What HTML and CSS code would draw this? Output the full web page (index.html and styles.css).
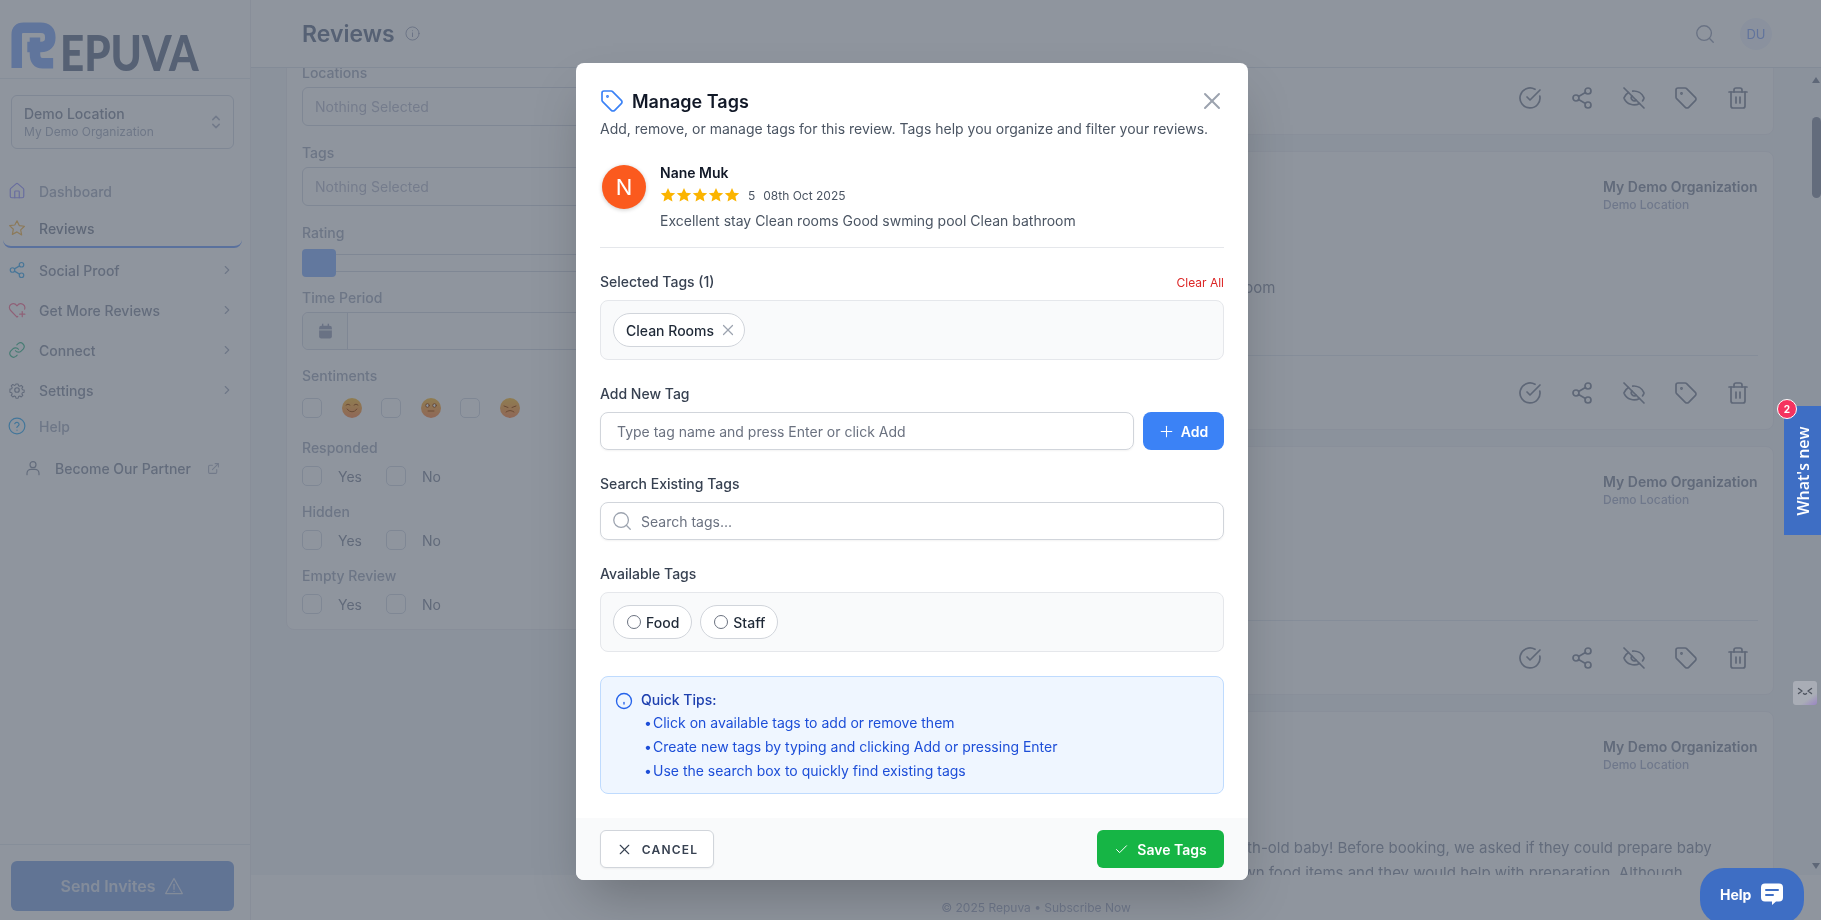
FILE: index.html
```html
<!DOCTYPE html>
<html lang="en">
<head>
    <meta charset="UTF-8">
    <meta name="viewport" content="width=device-width, initial-scale=1.0">
    <title>Reviews - Repuva</title>
    <link rel="stylesheet" href="styles.css">
</head>
<body>
    <!-- shared icons -->
    <svg class="icon-defs" xmlns="http://www.w3.org/2000/svg">
        <defs><linearGradient id="emo" x1="0" y1="0" x2="0" y2="1"><stop offset="0" stop-color="#f3cf83"/><stop offset="1" stop-color="#f5a884"/></linearGradient></defs>
        <symbol id="i-check" viewBox="0 0 24 24"><path d="M21.8 10A10 10 0 1 1 17 3.3"/><path d="m9 11 3 3L22 4"/></symbol>
        <symbol id="i-share" viewBox="0 0 24 24"><circle cx="18" cy="5" r="3"/><circle cx="6" cy="12" r="3"/><circle cx="18" cy="19" r="3"/><path d="m8.6 13.5 6.8 4"/><path d="m15.4 6.5-6.8 4"/></symbol>
        <symbol id="i-eyeoff" viewBox="0 0 24 24"><path d="M10.7 5.1A11 11 0 0 1 21.9 11.7a1 1 0 0 1 0 .7 11 11 0 0 1-1.4 2.5"/><path d="M14.1 14.2a3 3 0 0 1-4.2-4.2"/><path d="M17.5 17.5a11 11 0 0 1-15.4-5.2 1 1 0 0 1 0-.7 11 11 0 0 1 4.4-5.1"/><path d="m2 2 20 20"/></symbol>
        <symbol id="i-tag" viewBox="0 0 24 24"><path d="M12.6 2.6A2 2 0 0 0 11.2 2H4a2 2 0 0 0-2 2v7.2a2 2 0 0 0 .6 1.4l8.7 8.7a2.4 2.4 0 0 0 3.4 0l6.6-6.6a2.4 2.4 0 0 0 0-3.4z"/><circle cx="7.5" cy="7.5" r=".6"/></symbol>
        <symbol id="i-trash" viewBox="0 0 24 24"><path d="M3 6h18"/><path d="M19 6v14c0 1-1 2-2 2H7c-1 0-2-1-2-2V6"/><path d="M8 6V4c0-1 1-2 2-2h4c1 0 2 1 2 2v2"/><path d="M10 11v6"/><path d="M14 11v6"/></symbol>
        <symbol id="i-search" viewBox="0 0 24 24"><circle cx="11" cy="11" r="8"/><path d="m21 21-4.3-4.3"/></symbol>
        <symbol id="i-chev" viewBox="0 0 24 24"><path d="m9 18 6-6-6-6"/></symbol>
        <symbol id="i-x" viewBox="0 0 24 24"><path d="M18 6 6 18"/><path d="m6 6 12 12"/></symbol>
        <symbol id="i-star" viewBox="0 0 24 24"><path d="M12 1.5l3.2 7 7.6.8-5.7 5.1 1.6 7.5L12 18.1l-6.7 3.8 1.6-7.5L1.2 9.3l7.6-.8z"/></symbol>
    </svg>

    <div class="app">
        <!-- sidebar -->
        <aside class="sidebar">
            <div class="logo">
                <svg class="logo-mark" viewBox="0 0 48 50"><path d="M6 48V13Q6 6 13 6H31Q41 6 41 16Q41 26 31 26H17"/><path d="M25 16V33Q25 43 33 43H44"/></svg>
                <span class="logo-text">EPUVA</span>
            </div>
            <div class="loc-select">
                <div>
                    <div class="loc-name">Demo Location</div>
                    <div class="loc-org">My Demo Organization</div>
                </div>
                <svg class="loc-arrows" viewBox="0 0 12 20"><path d="M2 7l4-4 4 4"/><path d="M2 13l4 4 4-4"/></svg>
            </div>
            <nav class="nav">
                <a class="nav-item muted">
                    <svg class="nav-icon ic-house" viewBox="0 0 24 24"><path d="M15 21v-8a1 1 0 0 0-1-1h-4a1 1 0 0 0-1 1v8"/><path d="M3 10a2 2 0 0 1 .7-1.500l7-6a2 2 0 0 1 2.600 0l7 6A2 2 0 0 1 21 10v9a2 2 0 0 1-2 2H5a2 2 0 0 1-2-2z"/></svg>
                    Dashboard
                </a>
                <a class="nav-item active">
                    <svg class="nav-icon ic-star" viewBox="0 0 24 24"><path d="M12 2.500l3 6.300 6.900.9-5 4.800 1.300 6.800L12 17.200l-6.200 3.300 1.300-6.800-5-4.800 6.900-.9z"/></svg>
                    Reviews
                </a>
                <a class="nav-item has-sub first-sub">
                    <svg class="nav-icon ic-share"><use href="#i-share"/></svg>
                    Social Proof
                    <svg class="nav-chev"><use href="#i-chev"/></svg>
                </a>
                <a class="nav-item has-sub">
                    <svg class="nav-icon ic-heart" viewBox="0 0 24 24"><path d="M13 20.500l-1 1-8.500-8.800C1 10 1.500 6.500 3.800 4.800 6.500 3 9.800 3.700 12 6.500c2.200-2.800 5.500-3.500 8.200-1.700 2 1.400 2.700 3.800 2 6"/><path d="M19 14v7"/><path d="M15.500 17.500h7"/></svg>
                    Get More Reviews
                    <svg class="nav-chev"><use href="#i-chev"/></svg>
                </a>
                <a class="nav-item has-sub">
                    <svg class="nav-icon ic-link" viewBox="0 0 24 24"><path d="M10 13a5 5 0 0 0 7.500.5l3-3a5 5 0 0 0-7-7l-1.700 1.700"/><path d="M14 11a5 5 0 0 0-7.500-.5l-3 3a5 5 0 0 0 7 7l1.700-1.700"/></svg>
                    Connect
                    <svg class="nav-chev"><use href="#i-chev"/></svg>
                </a>
                <a class="nav-item has-sub">
                    <svg class="nav-icon ic-gear" viewBox="0 0 24 24"><path d="M10.300 2.800h3.400l.6 2.700 1.900.8 2.300-1.500 2.400 2.400-1.500 2.300.8 1.900 2.700.6v3.400l-2.700.6-.8 1.900 1.500 2.300-2.400 2.400-2.300-1.500-1.900.8-.6 2.700h-3.400l-.6-2.700-1.900-.8-2.300 1.500-2.400-2.400 1.500-2.300-.8-1.900-2.700-.6V10.600l2.700-.6.8-1.900-1.500-2.300 2.400-2.400 2.300 1.500 1.900-.8z" transform="translate(1.600 1.600) scale(.87)"/><circle cx="12" cy="12" r="3"/></svg>
                    Settings
                    <svg class="nav-chev"><use href="#i-chev"/></svg>
                </a>
                <a class="nav-item help-item muted">
                    <svg class="nav-icon ic-help" viewBox="0 0 24 24"><circle cx="12" cy="12" r="10.500"/><path d="M9 9a3 3 0 0 1 5.800 1c0 2-3 2.600-3 4"/><path d="M12 17.500h.01"/></svg>
                    Help
                </a>
                <a class="nav-partner">
                    <svg class="partner-icon" viewBox="0 0 24 24"><circle cx="12" cy="7" r="4.500"/><path d="M3 22v-2a6 6 0 0 1 6-6h6a6 6 0 0 1 6 6v2"/></svg>
                    Become Our Partner
                    <svg class="partner-ext" viewBox="0 0 24 24"><path d="M15 3h6v6"/><path d="M10 14 21 3"/><path d="M18 14v5a2 2 0 0 1-2 2H5a2 2 0 0 1-2-2V8a2 2 0 0 1 2-2h5"/></svg>
                </a>
            </nav>
            <div class="sidebar-foot">
                <button class="send-btn">Send Invites
                    <svg viewBox="0 0 24 24"><path d="M12 3 2 21h20z"/><path d="M12 10v6"/><path d="M12 18.500h.01"/></svg>
                </button>
            </div>
        </aside>

        <!-- main area -->
        <div class="main">
            <header class="topbar">
                <h1 class="page-title">Reviews</h1>
                <svg class="title-info" viewBox="0 0 24 24"><circle cx="12" cy="12" r="10.500"/><path d="M12 11v6"/><path d="M12 7.500h.01"/></svg>
                <svg class="top-search"><use href="#i-search"/></svg>
                <div class="top-avatar">DU</div>
            </header>

            <div class="scroll-wrap">
                <div class="content">
                    <section class="filters">
                        <div class="f-label">Locations</div>
                        <div class="f-select">Nothing Selected</div>
                        <div class="f-label">Tags</div>
                        <div class="f-select">Nothing Selected</div>
                        <div class="f-label">Rating</div>
                        <div class="f-slider"><span class="f-thumb"></span></div>
                        <div class="f-label">Time Period</div>
                        <div class="f-date">
                            <span class="f-date-addon">
                                <svg viewBox="0 0 24 24"><rect x="3" y="4" width="18" height="18" rx="3"/><rect class="cal-line" x="3" y="9" width="18" height="1.500"/><rect x="7" y="1" width="2" height="4"/><rect x="15" y="1" width="2" height="4"/></svg>
                            </span>
                        </div>
                        <div class="f-label">Sentiments</div>
                        <div class="f-row sentiments">
                            <span class="cb"></span>
                            <svg class="emoji" viewBox="0 0 20 20"><circle class="emoji-face" cx="10" cy="10" r="10"/><path d="M4 7q2-2 4 0M12 7q2-2 4 0M5 11q5 6 10 0"/></svg>
                            <span class="cb"></span>
                            <svg class="emoji" viewBox="0 0 20 20"><circle class="emoji-face" cx="10" cy="10" r="10"/><circle class="eye" cx="6.500" cy="7.500" r="1.800"/><circle class="eye" cx="13.500" cy="7.500" r="1.800"/><path d="M7 13h6"/></svg>
                            <span class="cb"></span>
                            <svg class="emoji" viewBox="0 0 20 20"><circle class="emoji-face" cx="10" cy="10" r="10"/><path d="M4 8l4 1.500M16 8l-4 1.500M6 14q4-3 8 0"/></svg>
                        </div>
                        <div class="f-label">Responded</div>
                        <div class="f-row yesno"><span class="cb"></span><span class="f-opt">Yes</span><span class="cb"></span><span class="f-opt">No</span></div>
                        <div class="f-label">Hidden</div>
                        <div class="f-row yesno"><span class="cb"></span><span class="f-opt">Yes</span><span class="cb"></span><span class="f-opt">No</span></div>
                        <div class="f-label">Empty Review</div>
                        <div class="f-row yesno"><span class="cb"></span><span class="f-opt">Yes</span><span class="cb"></span><span class="f-opt">No</span></div>
                    </section>

                    <section class="reviews">
                        <article class="review">
                            <div class="review-body body-stub"></div>
                            <div class="review-actions">
                                <svg><use href="#i-check"/></svg><svg><use href="#i-share"/></svg><svg><use href="#i-eyeoff"/></svg><svg><use href="#i-tag"/></svg><svg><use href="#i-trash"/></svg>
                            </div>
                        </article>
                        <article class="review">
                            <div class="review-body body-tall">
                                <div class="review-org"><div class="org-name">My Demo Organization</div><div class="org-loc">Demo Location</div></div>
                                <p class="review-text">Excellent stay Clean rooms Good swming pool Clean bathroom</p>
                            </div>
                            <div class="review-actions">
                                <svg><use href="#i-check"/></svg><svg><use href="#i-share"/></svg><svg><use href="#i-eyeoff"/></svg><svg><use href="#i-tag"/></svg><svg><use href="#i-trash"/></svg>
                            </div>
                        </article>
                        <article class="review">
                            <div class="review-body body-short">
                                <div class="review-org"><div class="org-name">My Demo Organization</div><div class="org-loc">Demo Location</div></div>
                            </div>
                            <div class="review-actions">
                                <svg><use href="#i-check"/></svg><svg><use href="#i-share"/></svg><svg><use href="#i-eyeoff"/></svg><svg><use href="#i-tag"/></svg><svg><use href="#i-trash"/></svg>
                            </div>
                        </article>
                        <article class="review">
                            <div class="review-body body-tall">
                                <div class="review-org"><div class="org-name">My Demo Organization</div><div class="org-loc">Demo Location</div></div>
                                <p class="review-text">We all stayed here on a family holiday with our eleven-month-old baby! Before booking, we asked if they could prepare baby<br>food, and they said that we could always bring along our own food items and they would help with preparation. Although</p>
                            </div>
                        </article>
                    </section>
                </div>
                <div class="scrollbar">
                    <span class="sb-up"></span>
                    <span class="sb-thumb"></span>
                    <span class="sb-down"></span>
                </div>
            </div>

            <footer class="page-foot">© 2025 Repuva • Subscribe Now</footer>
        </div>
    </div>

    <!-- modal -->
    <div class="backdrop"></div>
    <div class="modal">
        <div class="modal-body">
            <div class="modal-head">
                <svg class="modal-tag"><use href="#i-tag"/></svg>
                <h2>Manage Tags</h2>
                <svg class="modal-close"><use href="#i-x"/></svg>
            </div>
            <p class="modal-sub">Add, remove, or manage tags for this review. Tags help you organize and filter your reviews.</p>

            <div class="preview">
                <div class="preview-avatar">N</div>
                <div class="preview-info">
                    <div class="preview-name">Nane Muk</div>
                    <div class="preview-meta">
                        <span class="stars"><svg><use href="#i-star"/></svg><svg><use href="#i-star"/></svg><svg><use href="#i-star"/></svg><svg><use href="#i-star"/></svg><svg><use href="#i-star"/></svg></span>
                        <span class="meta-num">5</span><span>08th Oct 2025</span>
                    </div>
                    <div class="preview-text">Excellent stay Clean rooms Good swming pool Clean bathroom</div>
                </div>
            </div>

            <div class="label-row">
                <label>Selected Tags (1)</label>
                <a class="clear-all">Clear All</a>
            </div>
            <div class="tag-box">
                <span class="chip">Clean Rooms <svg><use href="#i-x"/></svg></span>
            </div>

            <label class="block-label">Add New Tag</label>
            <div class="add-row">
                <div class="text-input add-input">Type tag name and press Enter or click Add</div>
                <button class="add-btn"><svg><use href="#i-x"/></svg>Add</button>
            </div>

            <label class="block-label">Search Existing Tags</label>
            <div class="text-input search-input">
                <svg><use href="#i-search"/></svg>
                Search tags...
            </div>

            <label class="block-label">Available Tags</label>
            <div class="tag-box">
                <span class="chip chip-avail"><i class="radio"></i>Food</span>
                <span class="chip chip-avail"><i class="radio"></i>Staff</span>
            </div>

            <div class="tips">
                <svg class="tips-icon" viewBox="0 0 24 24"><circle cx="12" cy="12" r="10"/><path d="M12 14v2"/></svg>
                <div>
                    <div class="tips-title">Quick Tips:</div>
                    <ul class="tips-list">
                        <li>Click on available tags to add or remove them</li>
                        <li>Create new tags by typing and clicking Add or pressing Enter</li>
                        <li>Use the search box to quickly find existing tags</li>
                    </ul>
                </div>
            </div>
        </div>
        <div class="modal-foot">
            <button class="cancel-btn"><svg><use href="#i-x"/></svg>Cancel</button>
            <button class="save-btn"><svg viewBox="0 0 24 24"><path d="M20 6 9 17l-5-5"/></svg>Save Tags</button>
        </div>
    </div>

    <!-- floating widgets -->
    <div class="whatsnew"><span class="whatsnew-text">What's new</span><span class="whatsnew-badge">2</span></div>
    <div class="bot-widget">
        <svg viewBox="0 0 24 24"><path d="M5.500 7.500l3.500 2.500-3.500 2.500"/><path d="M18.500 7.500l-3.500 2.500 3.500 2.500"/><path d="M10.500 12.500q1.500 1.500 3 0"/></svg>
    </div>
    <div class="help-btn">Help
        <svg viewBox="0 0 24 24"><path class="bubble" d="M5 1.500h14a4 4 0 0 1 4 4v10a4 4 0 0 1-4 4h-3l-4 3.500v-3.500H5a4 4 0 0 1-4-4v-10a4 4 0 0 1 4-4z"/><path class="bubble-line" d="M6 8h12M6 13h7"/></svg>
    </div>
</body>
</html>
```

FILE: styles.css
```css
* {
    box-sizing: border-box;
}
html, body {
    margin: 0;
    height: 920px;
    overflow: hidden;
}
body {
    font-family: Inter, "Noto Sans", sans-serif;
    font-size: 14px;
    color: #111827;
    background: #fff;
}
svg {
    fill: none;
    stroke: currentColor;
    stroke-width: 2;
    stroke-linecap: round;
    stroke-linejoin: round;
}
.icon-defs {
    position: absolute;
    width: 0;
    height: 0;
}
.app {
    display: flex;
    height: 920px;
}

/* sidebar */
.sidebar {
    width: 251px;
    flex: none;
    display: flex;
    flex-direction: column;
    background: #fff;
    border-right: 1px solid #f0f0f4;
}
.logo {
    height: 79px;
    display: flex;
    align-items: flex-start;
    padding: 22px 0 0 11px;
    border-bottom: 1px solid #eef0f3;
}
.logo-mark {
    width: 46px;
    height: 48px;
    flex: none;
    color: #a8bde8;
    stroke-width: 11;
    stroke-linecap: butt;
}
.logo-text {
    font-family: Lato, sans-serif;
    font-weight: 900;
    font-size: 49px;
    line-height: 48px;
    margin: 6px 0 0 3px;
    color: #8f96a4;
    transform: scaleX(.86);
    transform-origin: left center;
}
.loc-select {
    margin: 16px 16px 0 11px;
    height: 54px;
    border: 1px solid #dfe2e8;
    border-radius: 6px;
    padding: 0 12px;
    display: flex;
    align-items: center;
    justify-content: space-between;
}
.loc-name {
    font-weight: 500;
    color: #a5a9b3;
    line-height: 18px;
}
.loc-org {
    font-size: 12px;
    color: #bfc3cd;
    line-height: 17px;
}
.loc-arrows {
    width: 10px;
    height: 16px;
    color: #c6c9d2;
}
.nav {
    margin-top: 23px;
    flex: 1;
}
.nav-item {
    height: 38px;
    display: flex;
    align-items: center;
    padding-left: 39px;
    position: relative;
    color: #a9adb7;
    font-weight: 500;
}
.nav-item.muted {
    color: #bfc3cd;
}
.nav-item.active {
    color: #9fa3ad;
    margin: 0 8px 0 3px;
    padding-left: 36px;
    border-bottom: 2px solid #9db5e8;
    border-radius: 0 0 8px 8px;
}
.nav-item.has-sub {
    height: 40px;
}
.nav-item.first-sub {
    margin-top: 2px;
}
.nav-item.help-item {
    height: 32px;
}
.nav-icon {
    position: absolute;
    left: 8px;
    width: 18px;
    height: 18px;
    stroke-width: 1.6;
}
.active .nav-icon {
    left: 5px;
}
.ic-house { color: #b3b1f0; }
.ic-star { color: #ecca90; }
.ic-share { color: #85bde0; }
.ic-heart { color: #e89db0; }
.ic-link { color: #84c6ae; }
.ic-gear { color: #a5a9b3; }
.ic-help { color: #7cbce2; }
.nav-chev {
    position: absolute;
    left: 220px;
    width: 14px;
    height: 14px;
    color: #bfc3cd;
}
.nav-partner {
    display: flex;
    align-items: center;
    height: 38px;
    margin-top: 7px;
    padding-left: 25px;
    color: #a9adb7;
    font-weight: 500;
}
.partner-icon {
    width: 16px;
    height: 16px;
    margin-right: 14px;
    stroke-width: 1.8;
}
.partner-ext {
    width: 13px;
    height: 13px;
    margin-left: 16px;
    color: #c6c9d2;
}
.sidebar-foot {
    border-top: 1px solid #eef0f3;
    padding: 16px 16px 9px 11px;
}
.send-btn {
    width: 223px;
    height: 50px;
    border: none;
    border-radius: 6px;
    background: #a9bbdc;
    color: #e8ecf4;
    font: 600 16px Inter, sans-serif;
    display: flex;
    align-items: center;
    justify-content: center;
    gap: 9px;
}
.send-btn svg {
    width: 20px;
    height: 20px;
    stroke-width: 1.5;
}

/* main area */
.main {
    flex: 1;
    min-width: 0;
    display: flex;
    flex-direction: column;
    background: #f7f8fa;
}
.topbar {
    height: 68px;
    flex: none;
    background: #fff;
    border-bottom: 1px solid #e8eaee;
    display: flex;
    align-items: center;
    padding: 0 49px 0 51px;
    position: relative;
    z-index: 2;
}
.page-title {
    margin: 0;
    font-size: 23px;
    font-weight: 600;
    color: #8f96a4;
}
.title-info {
    width: 15px;
    height: 15px;
    margin-left: 10px;
    color: #b5b9c5;
    stroke-width: 1.5;
}
.top-search {
    width: 22px;
    height: 22px;
    margin-left: auto;
    color: #b5b9c5;
    stroke-width: 1.5;
}
.top-avatar {
    width: 32px;
    height: 32px;
    margin-left: 24px;
    border-radius: 50%;
    background: #f5f7fc;
    color: #a9bbe8;
    font-size: 13px;
    display: flex;
    align-items: center;
    justify-content: center;
}
.scroll-wrap {
    flex: 1;
    min-height: 0;
    display: flex;
    overflow: hidden;
}
.content {
    flex: 1;
    min-width: 0;
    display: flex;
    align-items: flex-start;
    gap: 16px;
    padding: 0 38px 0 35px;
    margin-top: -31px;
}

/* filters panel */
.filters {
    width: 320px;
    flex: none;
    height: 593px;
    background: #fff;
    border: 1px solid #f0f1f4;
    border-radius: 8px;
    padding: 25px 15px 0;
}
.f-label {
    height: 20px;
    line-height: 20px;
    color: #bcc0ca;
    font-weight: 500;
}
.f-select {
    height: 39px;
    margin: 4px 0 17px;
    border: 1px solid #dfe2e8;
    border-radius: 6px;
    padding: 0 12px;
    line-height: 37px;
    color: #cbcdd7;
}
.f-slider {
    height: 18px;
    margin: 11px 0 16px;
    border: 1px solid #dfe2e8;
    border-radius: 2px;
    position: relative;
}
.f-thumb {
    position: absolute;
    left: -1px;
    top: -6px;
    width: 34px;
    height: 28px;
    border-radius: 4px;
    background: #adc4f0;
}
.f-date {
    height: 38px;
    margin: 4px 0 16px;
    border: 1px solid #dfe2e8;
    border-radius: 6px;
    display: flex;
}
.f-date-addon {
    width: 45px;
    background: #f9fafb;
    border-right: 1px solid #dfe2e8;
    display: flex;
    align-items: center;
    justify-content: center;
    border-radius: 6px 0 0 6px;
}
.f-date-addon svg {
    width: 17px;
    height: 17px;
    fill: #b5b9c5;
    stroke: none;
}
.cal-line {
    fill: #f9fafb;
}
.f-row {
    display: flex;
    align-items: center;
    height: 20px;
}
.sentiments {
    margin: 12px 0 20px;
}
.yesno {
    margin: 8px 0 16px;
}
.cb {
    width: 20px;
    height: 20px;
    flex: none;
    border: 1px solid #dfe2e8;
    border-radius: 5px;
    background: #fff;
}
.emoji {
    width: 20px;
    height: 20px;
    margin: 0 19px 0 20px;
    flex: none;
    color: #9a6a40;
    stroke-width: 1;
}
.emoji-face {
    fill: url(#emo);
    stroke: none;
}
.eye {
    fill: #fff;
}
.f-opt {
    color: #a5a9b3;
    margin: 0 18px 0 16px;
    width: 30px;
}

/* review cards */
.reviews {
    flex: 1;
    min-width: 0;
    display: flex;
    flex-direction: column;
    gap: 16px;
}
.review {
    background: #fff;
    border: 1px solid #f2f3f6;
    border-radius: 8px;
    flex: none;
}
.review-body {
    margin: 0 15px;
    border-bottom: 1px solid #eceef2;
    padding-top: 25px;
}
.review-body:last-child {
    border-bottom: none;
}
.body-stub {
    height: 23px;
    padding-top: 0;
}
.body-tall {
    height: 204px;
}
.body-short {
    height: 174px;
}
.review-org {
    width: 155px;
    margin-left: auto;
}
.org-name {
    font-weight: 600;
    line-height: 20px;
    color: #a5a9b3;
    white-space: nowrap;
}
.org-loc {
    font-size: 12px;
    font-weight: 500;
    line-height: 16px;
    color: #c1c5d3;
    white-space: nowrap;
}
.review-text {
    margin: 62px 0 0 192px;
    font-size: 15px;
    line-height: 25px;
    color: #a9adb7;
    white-space: nowrap;
}
.review-actions {
    height: 73px;
    display: flex;
    align-items: center;
    justify-content: flex-end;
    gap: 28px;
    padding-right: 23px;
    color: #9fa3ad;
}
.review-actions svg {
    width: 24px;
    height: 24px;
    stroke-width: 1.7;
}
.scrollbar {
    width: 9px;
    flex: none;
    position: relative;
    background: #f7f8fa;
}
.sb-up, .sb-down {
    position: absolute;
    left: 0;
    width: 0;
    height: 0;
    border-left: 4.500px solid transparent;
    border-right: 4.500px solid transparent;
}
.sb-up {
    top: 9px;
    border-bottom: 6px solid #9fa3ad;
}
.sb-down {
    bottom: 6px;
    border-top: 6px solid #9fa3ad;
}
.sb-thumb {
    position: absolute;
    top: 49px;
    left: 0;
    width: 9px;
    height: 81px;
    border-radius: 5px;
    background: #a9adb7;
}
.page-foot {
    height: 45px;
    flex: none;
    background: #fff;
    text-align: center;
    font-size: 12px;
    padding-top: 25px;
    line-height: 16px;
    color: #c1c5d3;
    position: relative;
    z-index: 1;
}

/* modal */
.backdrop {
    position: fixed;
    inset: 0;
    background: rgba(31, 43, 61, .5);
    backdrop-filter: blur(.6px) saturate(1.4);
    z-index: 10;
}
.modal {
    position: fixed;
    left: 576px;
    top: 63px;
    width: 672px;
    height: 817px;
    background: #fff;
    border-radius: 8px;
    box-shadow: 0 25px 50px -12px rgba(0, 0, 0, .25);
    z-index: 20;
    display: flex;
    flex-direction: column;
    overflow: hidden;
}
.modal-body {
    flex: 1;
    padding: 25px 24px 0;
}
.modal-head {
    display: flex;
    align-items: center;
    height: 26px;
    margin-bottom: 5px;
}
.modal-head h2 {
    margin: 0;
    font-size: 18px;
    font-weight: 600;
    color: #111827;
}
.modal-tag {
    width: 24px;
    height: 24px;
    margin-right: 8px;
    color: #3b82f6;
    stroke-width: 1.7;
}
.modal-close {
    width: 28px;
    height: 28px;
    margin-left: auto;
    margin-right: -2px;
    color: #9ca3af;
    stroke-width: 1.7;
}
.modal-sub {
    margin: 0;
    line-height: 20px;
    color: #4b5563;
    white-space: nowrap;
}
.preview {
    display: flex;
    margin-top: 24px;
    padding: 0 0 14px;
    border-bottom: 1px solid #e5e7eb;
}
.preview-avatar {
    width: 44px;
    height: 44px;
    margin: 2px 14px 0 2px;
    flex: none;
    border-radius: 50%;
    background: #fb5a1e;
    color: #fff;
    font-size: 22px;
    display: flex;
    align-items: center;
    justify-content: center;
    box-shadow: 0 1px 4px rgba(0, 0, 0, .2);
}
.preview-name {
    font-weight: 600;
    line-height: 20px;
    color: #111827;
}
.preview-meta {
    display: flex;
    align-items: center;
    height: 24px;
    font-size: 12px;
    color: #4b5563;
}
.stars {
    display: flex;
    width: 88px;
}
.stars svg {
    width: 16px;
    height: 16px;
    fill: #fbb400;
    stroke: none;
}
.meta-num {
    margin-right: 8px;
}
.preview-text {
    margin-top: 2px;
    line-height: 24px;
    color: #4b5563;
    white-space: nowrap;
}
.label-row {
    display: flex;
    justify-content: space-between;
    align-items: center;
    margin-top: 24px;
    height: 20px;
    margin-bottom: 8px;
}
.label-row label, .block-label {
    font-weight: 500;
    color: #374151;
    line-height: 20px;
}
.clear-all {
    font-size: 12px;
    color: #dc2626;
}
.tag-box {
    height: 60px;
    background: #f9fafb;
    border: 1px solid #e5e7eb;
    border-radius: 8px;
    padding: 12px;
    display: flex;
    gap: 8px;
}
.chip {
    height: 34px;
    display: inline-flex;
    align-items: center;
    padding: 0 7px 0 12px;
    background: #fff;
    border: 1px solid #d1d5db;
    border-radius: 17px;
    font-weight: 500;
    color: #1f2937;
}
.chip svg {
    width: 18px;
    height: 18px;
    margin-left: 5px;
    color: #9ca3af;
    stroke-width: 1.6;
}
.chip-avail {
    padding: 0 12px 0 13px;
}
.radio {
    width: 14px;
    height: 14px;
    margin-right: 5px;
    border: 1px solid #6b7280;
    border-radius: 50%;
}
.block-label {
    display: block;
    margin: 24px 0 8px;
}
.add-row {
    display: flex;
    gap: 9px;
}
.text-input {
    height: 38px;
    border: 1px solid #d1d5db;
    border-radius: 8px;
    display: flex;
    align-items: center;
    color: #6b7280;
    box-shadow: 0 1px 2px rgba(0, 0, 0, .05);
}
.add-input {
    flex: 1;
    padding-left: 16px;
}
.search-input {
    padding-left: 10px;
}
.search-input svg {
    width: 22px;
    height: 22px;
    margin-right: 8px;
    color: #9ca3af;
    stroke-width: 1.4;
}
.add-btn {
    width: 81px;
    height: 38px;
    border: none;
    border-radius: 8px;
    background: #3b82f6;
    color: #fff;
    font: 600 14px Inter, sans-serif;
    display: flex;
    align-items: center;
    justify-content: center;
    gap: 7px;
}
.add-btn svg {
    width: 15px;
    height: 15px;
    transform: rotate(45deg);
    stroke-width: 1.7;
}
.tips {
    margin-top: 24px;
    height: 118px;
    background: #eff6ff;
    border: 1px solid #bfdbfe;
    border-radius: 8px;
    padding: 11px 14px;
    display: flex;
    color: #1d4ed8;
}
.tips-icon {
    width: 18px;
    height: 18px;
    flex: none;
    margin: 4px 8px 0 0;
    color: #2563eb;
    stroke-width: 1.8;
}
.tips-title {
    font-weight: 500;
    color: #1e40af;
    line-height: 23px;
}
.tips-list {
    list-style: none;
    margin: 0;
    padding: 0;
}
.tips-list li {
    line-height: 24px;
    padding-left: 12px;
    position: relative;
}
.tips-list li::before {
    content: "•";
    position: absolute;
    left: 3px;
}
.modal-foot {
    height: 62px;
    flex: none;
    background: #f9fafb;
    padding: 12px 24px;
    display: flex;
    justify-content: space-between;
}
.cancel-btn {
    width: 114px;
    height: 38px;
    background: #fff;
    border: 1px solid #d1d5db;
    border-radius: 6px;
    color: #374151;
    font: 600 12px Inter, sans-serif;
    letter-spacing: .1em;
    text-transform: uppercase;
    display: flex;
    align-items: center;
    justify-content: center;
    gap: 9px;
    box-shadow: 0 1px 2px rgba(0, 0, 0, .05);
}
.cancel-btn svg {
    width: 17px;
    height: 17px;
    stroke-width: 1.6;
}
.save-btn {
    width: 127px;
    height: 38px;
    border: none;
    border-radius: 6px;
    background: #16b545;
    color: #fff;
    font: 600 14px Inter, sans-serif;
    display: flex;
    align-items: center;
    justify-content: center;
    gap: 8px;
}
.save-btn svg {
    width: 15px;
    height: 15px;
    stroke-width: 1.6;
}

/* floating widgets */
.whatsnew {
    position: fixed;
    right: 0;
    top: 406px;
    width: 37px;
    height: 129px;
    background: #3e6ec4;
    z-index: 30;
    display: flex;
    align-items: center;
    justify-content: center;
}
.whatsnew-text {
    font-family: "Open Sans", sans-serif;
    font-weight: 600;
    font-size: 16px;
    color: #fff;
    white-space: nowrap;
    transform: rotate(-90deg);
}
.whatsnew-badge {
    position: absolute;
    left: -7px;
    top: -7px;
    width: 20px;
    height: 20px;
    border: 1.500px solid #fff;
    border-radius: 50%;
    background: #f5325f;
    color: #fff;
    font-size: 10px;
    font-weight: 700;
    display: flex;
    align-items: center;
    justify-content: center;
}
.bot-widget {
    position: fixed;
    right: 4px;
    top: 681px;
    width: 24px;
    height: 24px;
    border-radius: 3px;
    background: linear-gradient(145deg, #a9adb6 70%, #9a84c4);
    color: #4f5560;
    z-index: 30;
}
.bot-widget svg {
    display: block;
    width: 24px;
    height: 24px;
    stroke-width: 1.4;
}
.help-btn {
    position: fixed;
    right: 17px;
    top: 868px;
    width: 104px;
    height: 56px;
    border-radius: 24px;
    background: #3e6ec4;
    color: #fff;
    font-weight: 700;
    font-size: 14px;
    z-index: 30;
    display: flex;
    align-items: center;
    padding: 0 0 4px 20px;
    gap: 9px;
}
.help-btn svg {
    width: 24px;
    height: 24px;
    stroke: none;
}
.bubble {
    fill: #fff;
}
.bubble-line {
    stroke: #3e6ec4;
    stroke-width: 2;
}
```
